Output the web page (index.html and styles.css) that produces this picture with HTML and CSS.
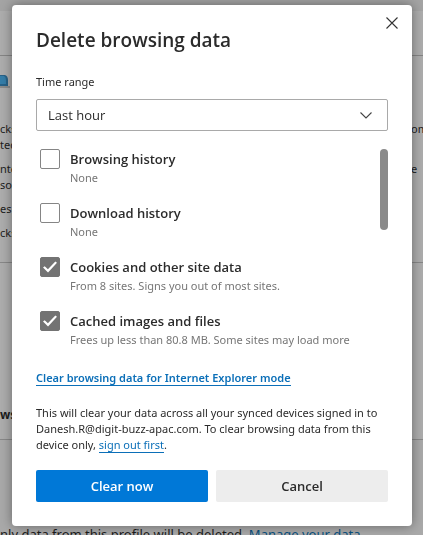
FILE: index.html
```html
<!DOCTYPE html>
<html lang="en">
<head>
<meta charset="utf-8">
<meta name="viewport" content="width=device-width, initial-scale=1">
<title>Delete browsing data</title>
<link rel="stylesheet" href="styles.css">
</head>
<body>
<div class="page" aria-hidden="true">
  <div class="page-top"></div>
  <div class="page-bar"></div>
  <div class="page-card page-intro">
    <svg class="page-art" width="10" height="14" viewBox="0 0 10 14"><path d="M0 0h5q3 1 3 5v6H0z" fill="#286288"/><path d="M0 1h4q2 1 2 4v4H0z" fill="#347da8"/><path d="M0 11h10v2H0z" fill="#8c8c8c"/></svg>
    <p class="page-text"><span>cks<br>ted</span><span>om</span></p>
    <p class="page-text"><span>nte<br>so</span><span>e</span></p>
    <p class="page-text"><span>es w</span></p>
    <p class="page-text"><span>cks</span></p>
  </div>
  <div class="page-card page-section"><strong>wsi</strong></div>
  <p class="page-note">nly data from this profile will be deleted. <a href="#" tabindex="-1">Manage your data</a></p>
</div>

<div class="overlay">
  <form class="dialog" role="dialog" aria-labelledby="title">
    <button class="close" type="button" aria-label="Close">
      <svg width="12" height="12" viewBox="0 0 12 12"><path d="M.5.5l11 11M11.5.5l-11 11" fill="none" stroke="#333" stroke-width="1.1"/></svg>
    </button>
    <h1 id="title">Delete browsing data</h1>
    <label class="range-label" for="range">Time range</label>
    <div class="select">
      <select id="range"><option>Last hour</option></select>
      <svg width="12" height="7" viewBox="0 0 12 7"><path d="M.5.5L6 6l5.500-5.500" fill="none" stroke="#444" stroke-width="1.1"/></svg>
    </div>
    <div class="list">
      <div class="options">
        <div class="option">
          <input type="checkbox" id="history">
          <label for="history"><b>Browsing history</b><small>None</small></label>
        </div>
        <div class="option">
          <input type="checkbox" id="downloads">
          <label for="downloads"><b>Download history</b><small>None</small></label>
        </div>
        <div class="option">
          <input type="checkbox" id="cookies" checked>
          <label for="cookies"><b>Cookies and other site data</b><small>From 8 sites. Signs you out of most sites.</small></label>
        </div>
        <div class="option">
          <input type="checkbox" id="cache" checked>
          <label for="cache"><b>Cached images and files</b><small>Frees up less than 80.8 MB. Some sites may load more</small></label>
        </div>
      </div>
      <div class="scroll-thumb"></div>
    </div>
    <a class="ie-link" href="#">Clear browsing data for Internet Explorer mode</a>
    <p class="notice">This will clear your data across all your synced devices signed in to Danesh.R@digit-buzz-apac.com. To clear browsing data from this device only, <a href="#">sign out first</a>.</p>
    <div class="actions">
      <button class="primary" type="submit">Clear now</button>
      <button type="button">Cancel</button>
    </div>
  </form>
</div>
</body>
</html>
```
FILE: styles.css
```css
* { box-sizing: border-box; }

body {
  margin: 0;
  height: 100vh;
  overflow: hidden;
  background: #a9a9a9;
  color: #2b2b2b;
  font: 11px/16px "Noto Sans", "Open Sans", sans-serif;
}

/* Dimmed settings page behind the dialog */
.page { color: #1c1c1c; }
.page-top { height: 11px; background: #a4a4a4; }
.page-bar { height: 45px; background: #adadad; border-bottom: 1px solid #858585; }
.page-card { background: #adadad; border-bottom: 1px solid #888; }
.page-intro { padding: 19px 0 13px; }
.page-art { display: block; margin-bottom: 32px; }
.page-text {
  display: grid;
  grid-template-columns: 1fr 12px;
  margin: 0 0 8px;
}
.page-text > span { white-space: nowrap; }
.page-section { padding: 144px 0 16px; font-size: 12px; }
.page-note {
  margin: 0;
  padding-top: 84px;
  font-size: 13px;
  line-height: 20px;
  white-space: nowrap;
}
.page-note a { color: #08507f; }

.overlay {
  position: fixed;
  inset: 0;
  padding: 5px 11px 9px 12px;
}

.dialog {
  position: relative;
  display: flex;
  flex-direction: column;
  padding: 21px 24px 24px;
  background: #fff;
  border-radius: 4px;
  box-shadow: 0 0 12px rgba(0, 0, 0, .4);
}

.close {
  position: absolute;
  top: 2px;
  right: 4px;
  display: grid;
  place-items: center;
  width: 32px;
  height: 32px;
  padding: 0;
  border: 0;
  background: none;
}

h1 {
  margin: 0 0 20px;
  font: 600 19px/28px "Open Sans", "Noto Sans", sans-serif;
}

.range-label { margin-bottom: 9px; }

.select { display: grid; align-items: center; }
.select > * { grid-area: 1 / 1; }
.select svg { justify-self: end; margin-right: 16px; pointer-events: none; }

select {
  appearance: none;
  width: 100%;
  height: 32px;
  padding: 0 11px;
  border: 1px solid #a9a9a9;
  border-radius: 2px;
  background: #fff;
  color: inherit;
  font: 13px "Open Sans", "Noto Sans", sans-serif;
}

.list {
  display: flex;
  justify-content: space-between;
  margin: 18px 0 21px;
  padding-left: 4px;
}

.options { display: grid; gap: 16px; }
.option { display: flex; gap: 10px; height: 38px; }
.option b, .option small { display: block; white-space: nowrap; }
.option b { font: 600 13px/20px "Open Sans", "Noto Sans", sans-serif; }
.option small { font-size: 11px; line-height: 18px; color: #767676; }

.option input {
  appearance: none;
  flex: none;
  width: 20px;
  height: 20px;
  margin: 0;
  border: 1px solid #858585;
  border-radius: 2px;
  background: #fff;
}
.option input:checked {
  display: grid;
  place-items: center;
  border-color: #737373;
  background: #737373;
}
.option input:checked::before {
  content: "";
  width: 14px;
  height: 12px;
  background: #fff;
  clip-path: polygon(0 55%, 12% 43%, 35% 69%, 88% 4%, 100% 14%, 36% 95%);
}

.scroll-thumb {
  width: 8px;
  height: 81px;
  border-radius: 4px;
  background: #8a8a8a;
}

a { color: #0b6fb8; }
.ie-link, .notice a {
  text-decoration: none;
  border-bottom: 1px solid;
}
.ie-link {
  align-self: flex-start;
  line-height: 15px;
  font-weight: 600;
  white-space: nowrap;
}
.notice { margin: 19px 0 17px; }

.actions { display: grid; grid-template-columns: 1fr 1fr; gap: 8px; }
.actions button {
  height: 32px;
  padding: 0;
  border: 0;
  border-radius: 2px;
  background: #ededed;
  color: #2b2b2b;
  font: 600 13px "Open Sans", "Noto Sans", sans-serif;
}
.actions .primary { background: #0078d7; color: #fff; }
```
